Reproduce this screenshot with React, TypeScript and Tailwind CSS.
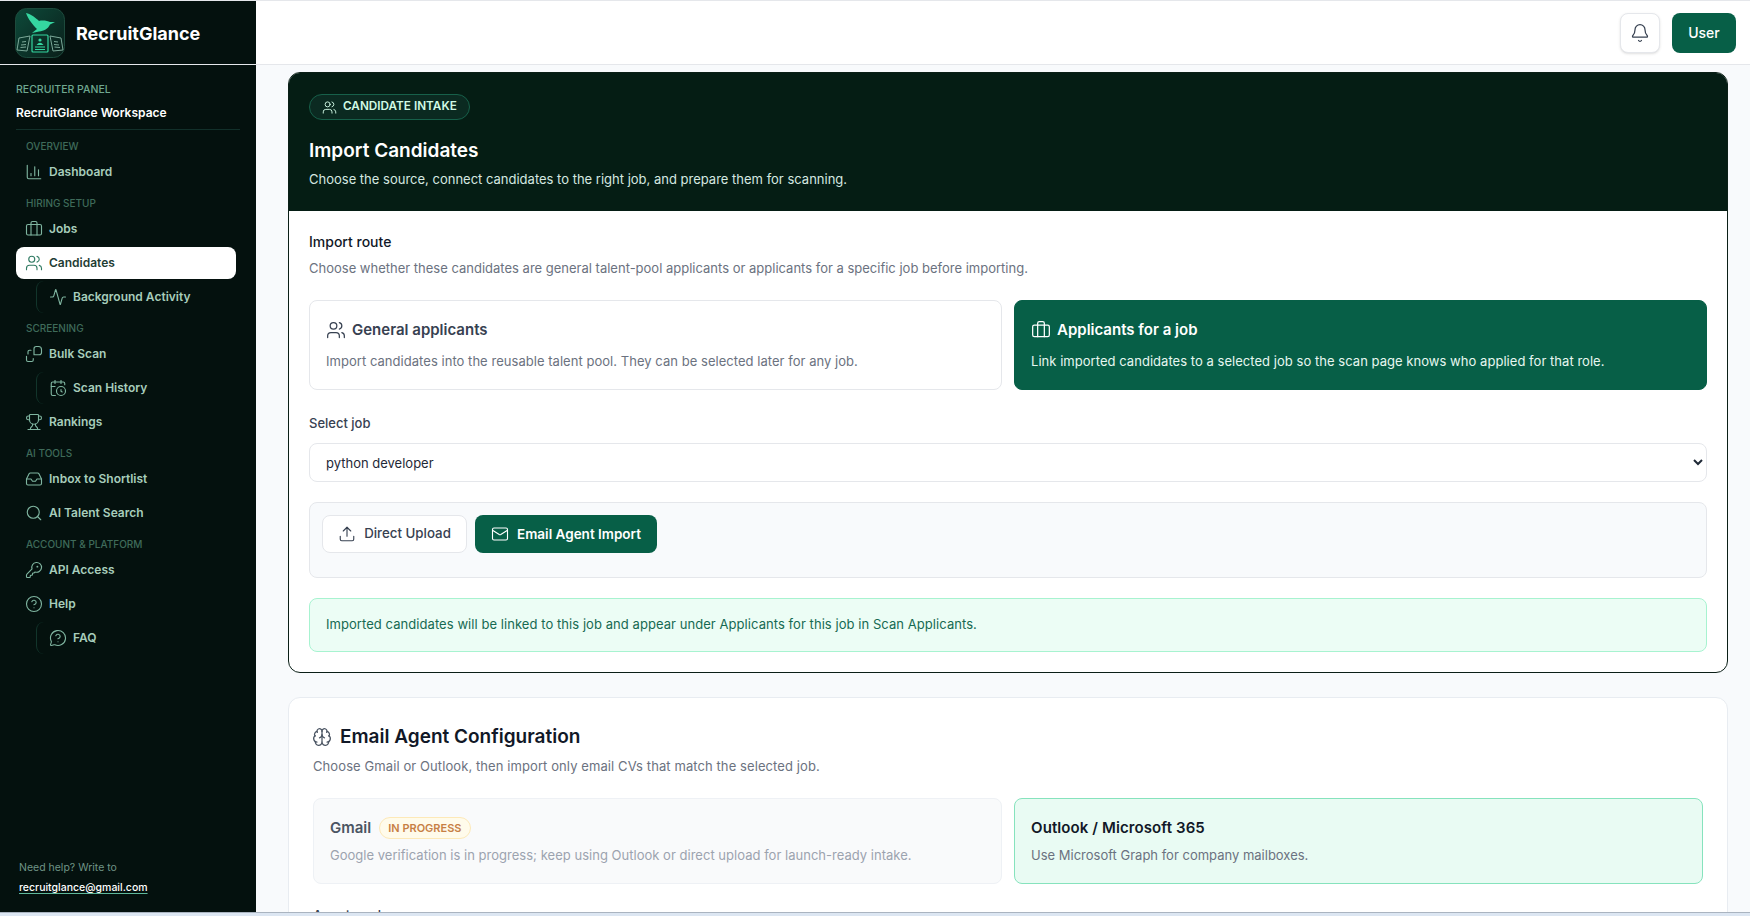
import React from "react";
import {
  ChartColumn, Briefcase, Users, Activity, CalendarClock, Trophy, Inbox, Search, KeyRound,
  CircleHelp, MessageCircleQuestion, Bell, Upload, Mail, Brain,
} from "lucide-react";

function BulkIcon({ size = 18, strokeWidth = 1.5, className = "" }: { size?: number; strokeWidth?: number; className?: string }) {
  return (
    <svg width={size} height={size} viewBox="0 0 24 24" fill="none" stroke="currentColor" strokeWidth={strokeWidth} strokeLinecap="round" strokeLinejoin="round" className={className}>
      <path d="M12 13V5a3 3 0 0 1 3-3h3a4 4 0 0 1 4 4v4a3 3 0 0 1-3 3h-7Z" />
      <path d="M8 7H6a2 2 0 0 0-2 2v3" />
      <path d="M2 15v5a2 2 0 0 0 2 2h5a2 2 0 0 0 2-2v-2" />
    </svg>
  );
}

function Logo() {
  return (
    <svg width="50" height="50" viewBox="0 0 50 50" className="shrink-0">
      <defs>
        <linearGradient id="lg" x1="0" y1="0" x2="1" y2="1">
          <stop offset="0" stopColor="#0d4a3a" />
          <stop offset="1" stopColor="#0a1f1a" />
        </linearGradient>
      </defs>
      <rect x="0.5" y="0.5" width="49" height="49" rx="11" fill="url(#lg)" stroke="#1d4a3c" />
      <path d="M11 5 C16 6 21 10 24 13 C28 12 33 13 35 14 L40 14 L35 16.5 C33 21 29 23 24 23.5 L17 25 L22 21 C18 17 13 11 11 5 Z" fill="#35d6a0" />
      <g fill="none" stroke="#2fb98a" strokeWidth="1">
        <path d="M4 30 L15 28 L12 43 L2 42 Z" stroke="#7ba898" />
        <path d="M35 28 L46 30 L48 42 L38 43 Z" stroke="#7ba898" />
        <path d="M7 34 L11 33.5 M6 37 L11 36.5 M5.5 39.5 L11 39 M39 33.5 L43 34 M39 36.5 L44 37 M39.5 39 L45 39.5" stroke="#7ba898" />
        <rect x="17" y="27" width="16" height="17" rx="1" stroke="#35d6a0" strokeWidth="1.2" />
        <path d="M20 39 L30 39 M20 41.5 L30 41.5" stroke="#35d6a0" strokeWidth="1.2" />
        <circle cx="25" cy="32" r="1.6" fill="#35d6a0" stroke="none" />
        <path d="M21.5 37 Q25 32.5 28.5 37 Z" fill="#35d6a0" stroke="none" />
      </g>
    </svg>
  );
}

function Label({ children }: { children: React.ReactNode }) {
  return (
    <div className="pl-[26px] h-[14px] mt-[6px] mb-[1px] text-[10px] leading-[14px] font-medium uppercase text-[#3f6b5a]">
      {children}
    </div>
  );
}

function Item({ icon: I, children, active }: { icon: any; children: React.ReactNode; active?: boolean }) {
  return (
    <div
      className={
        "flex items-center gap-[6px] h-[32px] w-[220px] ml-[16px] pl-[9px] rounded-lg text-[12px] font-semibold " +
        (active ? "bg-white text-[#1f3d34]" : "text-[#a7cdbb]")
      }
    >
      <I size={18} strokeWidth={1.5} className={active ? "text-[#2f7a62]" : "text-[#7fb5a0]"} />
      <span>{children}</span>
    </div>
  );
}

function Sub({ icon: I, children }: { icon: any; children: React.ReactNode }) {
  return (
    <div className="ml-[36px] h-[32px] w-[200px] flex items-center gap-[6px] pl-[12px] border-l border-[#12352b] rounded-bl-lg rounded-tl-lg text-[12px] font-semibold text-[#a7cdbb]">
      <I size={18} strokeWidth={1.5} className="text-[#7fb5a0]" />
      <span>{children}</span>
    </div>
  );
}

function Sidebar() {
  return (
    <aside className="w-[256px] shrink-0 bg-[#04110e] flex flex-col">
      <div className="h-[64px] shrink-0 flex items-center gap-[11px] pl-[15px] pt-px border-b border-[#e5e7eb]">
        <Logo />
        <span className="text-[18px] font-bold text-white">RecruitGlance</span>
      </div>
      <div className="px-[16px] pt-[17px]">
        <div className="text-[10.5px] leading-[16px] font-medium uppercase text-[#6fa890]">Recruiter Panel</div>
        <div className="mt-[6px] text-[12px] leading-[18px] font-semibold text-white">RecruitGlance Workspace</div>
        <div className="mt-[7px] h-px w-[224px] bg-[#12302a]" />
      </div>
      <div className="flex flex-col gap-[2px] mt-[3px]">
        <Label>Overview</Label>
        <Item icon={ChartColumn}>Dashboard</Item>
        <Label>Hiring Setup</Label>
        <Item icon={Briefcase}>Jobs</Item>
        <Item icon={Users} active>Candidates</Item>
        <Sub icon={Activity}>Background Activity</Sub>
        <Label>Screening</Label>
        <Item icon={BulkIcon}>Bulk Scan</Item>
        <Sub icon={CalendarClock}>Scan History</Sub>
        <Item icon={Trophy}>Rankings</Item>
        <Label>AI Tools</Label>
        <Item icon={Inbox}>Inbox to Shortlist</Item>
        <Item icon={Search}>AI Talent Search</Item>
        <Label>Account &amp; Platform</Label>
        <Item icon={KeyRound}>API Access</Item>
        <Item icon={CircleHelp}>Help</Item>
        <Sub icon={MessageCircleQuestion}>FAQ</Sub>
      </div>
      <div className="mt-auto pl-[19px] pb-[14px] text-[10.5px] leading-[20px]">
        <div className="text-[#6f9486]">Need help? Write to</div>
        <div className="font-medium text-white underline underline-offset-2 decoration-[#5fb89a]">recruitglance@gmail.com</div>
      </div>
    </aside>
  );
}

function Route({ icon: I, title, desc, active }: { icon: any; title: string; desc: string; active?: boolean }) {
  return (
    <div
      className={
        "flex-1 h-[90px] rounded-lg border px-[16px] pt-[17px] " +
        (active ? "bg-[#075f47] border-[#075f47] text-white" : "bg-white border-[#e5e7eb] text-[#374151]")
      }
    >
      <div className="flex items-center gap-[6px] h-[24px]">
        <I size={20} strokeWidth={1.5} />
        <span className="text-[15px] font-semibold">{title}</span>
      </div>
      <p className={"mt-[9px] text-[13px] leading-[20px] tracking-[0.04px] " + (active ? "text-[#e6f7f0]" : "text-[#6b7280]")}>{desc}</p>
    </div>
  );
}

function Main() {
  return (
    <main className="flex-1 min-w-0 bg-[#f8fafc] flex flex-col">
      <header className="h-[64px] shrink-0 bg-white border-b border-[#e5e7eb] flex items-center justify-end gap-[12px] pr-[14px]">
        <button className="w-[40px] h-[40px] rounded-lg border border-[#e5e7eb] bg-white shadow-sm flex items-center justify-center text-[#374151]">
          <Bell size={20} strokeWidth={1.5} />
        </button>
        <button className="w-[64px] h-[40px] rounded-lg bg-[#075f47] text-white text-[14px] font-medium">User</button>
      </header>
      <div className="flex-1 overflow-hidden pl-[32px] pr-[22px] pt-[7px]">
        <section className="h-[601px] rounded-xl border border-[#0b1f17] bg-white overflow-hidden">
          <div className="h-[138px] bg-[#051d14] px-[20px] pt-[21px] text-white">
            <div className="inline-flex items-center gap-[6px] h-[26px] pl-[12px] pr-[12px] rounded-full border border-[#17604a] bg-[#0b2a21] text-[11.75px] font-semibold uppercase text-[#d1fae5]">
              <Users size={15} strokeWidth={1.5} />
              Candidate Intake
            </div>
            <h1 className="mt-[15px] text-[19px] leading-[30px] font-semibold">Import Candidates</h1>
            <p className="mt-[3px] text-[13px] leading-[20px] text-[#d5e8e0]">
              Choose the source, connect candidates to the right job, and prepare them for scanning.
            </p>
          </div>
          <div className="px-[20px] pt-[21px]">
            <div className="text-[14px] leading-[20px] font-medium text-[#111827]">Import route</div>
            <p className="mt-[6px] text-[13px] leading-[20px] text-[#6b7280]">
              Choose whether these candidates are general talent-pool applicants or applicants for a specific job before importing.
            </p>
            <div className="mt-[22px] flex gap-[12px]">
              <Route icon={Users} title="General applicants" desc="Import candidates into the reusable talent pool. They can be selected later for any job." />
              <Route active icon={Briefcase} title="Applicants for a job" desc="Link imported candidates to a selected job so the scan page knows who applied for that role." />
            </div>
            <div className="mt-[23px] text-[13px] leading-[20px] font-medium text-[#374151]">Select job</div>
            <select className="mt-[10px] block w-full h-[39px] rounded-lg border border-[#e5e7eb] bg-white pl-[12px] pr-[8px] text-[13px] text-[#1f2937]">
              <option>python developer</option>
            </select>
            <div className="mt-[20px] h-[76px] rounded-lg border border-[#e5e7eb] bg-[#f8fafc] pl-[12px] pt-[12px] flex items-start gap-[8px]">
              <button className="h-[38px] w-[145px] rounded-lg border border-[#e5e7eb] bg-white flex items-center justify-center gap-[8px] text-[13.3px] font-medium text-[#374151]">
                <Upload size={18} strokeWidth={1.5} />
                Direct Upload
              </button>
              <button className="h-[38px] w-[182px] rounded-lg bg-[#075f47] flex items-center justify-center gap-[8px] text-[13.5px] font-semibold text-white">
                <Mail size={18} strokeWidth={1.5} />
                Email Agent Import
              </button>
            </div>
            <div className="mt-[20px] h-[54px] rounded-lg border border-[#a7f3d0] bg-[#ecfdf5] pl-[16px] flex items-center text-[13px] tracking-[0.06px] text-[#166a52]">
              Imported candidates will be linked to this job and appear under Applicants for this job in Scan Applicants.
            </div>
          </div>
        </section>
        <section className="mt-[24px] rounded-xl border border-[#e8ecf1] bg-white px-[24px] pt-[24px] pb-[24px]">
          <div className="flex items-center gap-[8px] h-[30px]">
            <Brain size={20} strokeWidth={1.5} className="text-[#4b5563] -ml-[1px]" />
            <h2 className="text-[19px] font-semibold text-[#111827]">Email Agent Configuration</h2>
          </div>
          <p className="mt-[4px] text-[13px] leading-[20px] tracking-[0.09px] text-[#6b7280]">
            Choose Gmail or Outlook, then import only email CVs that match the selected job.
          </p>
          <div className="mt-[22px] flex gap-[12px]">
            <div className="flex-1 h-[86px] rounded-lg border border-[#eef1f5] bg-[#f9fafb] px-[16px] pt-[17px]">
              <div className="flex items-center gap-[8px] h-[24px]">
                <span className="text-[15px] font-semibold text-[#4b5563]">Gmail</span>
                <span className="h-[22px] px-[8px] rounded-full border border-[#fde9b8] bg-[#fffbeb] text-[11px] leading-[20px] font-semibold text-[#c77f45]">IN PROGRESS</span>
              </div>
              <p className="mt-[5px] text-[13px] leading-[20px] tracking-[0.02px] text-[#9ca3af]">
                Google verification is in progress; keep using Outlook or direct upload for launch-ready intake.
              </p>
            </div>
            <div className="flex-1 h-[86px] rounded-lg border border-[#86e3bd] bg-[#e9fbf3] px-[16px] pt-[17px]">
              <div className="flex items-center h-[24px] text-[15px] font-semibold tracking-[0.1px] text-[#111827]">Outlook / Microsoft 365</div>
              <p className="mt-[5px] text-[13px] leading-[20px] text-[#6b7280]">Use Microsoft Graph for company mailboxes.</p>
            </div>
          </div>
          <div className="mt-[21px] text-[13px] leading-[20px] font-medium text-[#374151]">Agent mode</div>
        </section>
      </div>
    </main>
  );
}

export default function App() {
  return (
    <div className="h-screen w-full overflow-hidden flex flex-col font-['Inter',sans-serif] bg-white">
      <div className="h-px shrink-0 bg-[#e5e7eb]" />
      <div className="flex-1 min-h-0 flex">
        <Sidebar />
        <Main />
      </div>
      <div className="h-[4px] shrink-0 bg-[#dce6f2] border-t border-[#aab4c0]" />
    </div>
  );
}
